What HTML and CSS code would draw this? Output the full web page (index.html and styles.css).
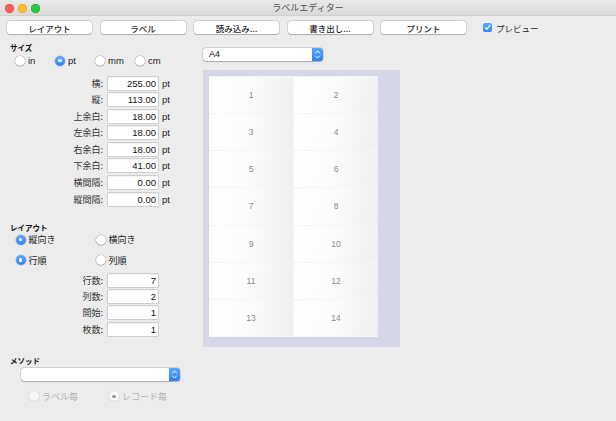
FILE: index.html
```html
<!DOCTYPE html>
<html lang="ja">
<head>
<meta charset="utf-8">
<title>ラベルエディター</title>
<link rel="stylesheet" href="styles.css">
</head>
<body>
<div class="window">
  <div class="titlebar">
    <div class="lights">
      <span class="light red"></span>
      <span class="light yellow"></span>
      <span class="light green"></span>
    </div>
    <div class="title">ラベルエディター</div>
    <div></div>
  </div>

  <div class="toolbar">
    <button class="btn">レイアウト</button>
    <button class="btn">ラベル</button>
    <button class="btn">読み込み...</button>
    <button class="btn">書き出し...</button>
    <button class="btn">プリント</button>
    <label class="check">
      <span class="checkbox"><svg viewBox="0 0 9 9" width="9" height="9"><path d="M2.2 4.7 L3.8 6.4 L6.9 2.4" fill="none" stroke="#fff" stroke-width="1.2" stroke-linecap="round" stroke-linejoin="round"/></svg></span>
      <span>プレビュー</span>
    </label>
  </div>

  <div class="content">
    <div class="left">
      <div class="hdr hdr-size">サイズ</div>
      <div class="units">
        <span class="radio-item"><span class="radio"></span>in</span>
        <span class="radio-item"><span class="radio on"></span>pt</span>
        <span class="radio-item"><span class="radio"></span>mm</span>
        <span class="radio-item"><span class="radio"></span>cm</span>
      </div>
      <div class="fields fields-size">
        <div class="field"><span class="lbl">横:</span><span class="input">255.00</span><span class="unit">pt</span></div>
        <div class="field"><span class="lbl">縦:</span><span class="input">113.00</span><span class="unit">pt</span></div>
        <div class="field"><span class="lbl">上余白:</span><span class="input">18.00</span><span class="unit">pt</span></div>
        <div class="field"><span class="lbl">左余白:</span><span class="input">18.00</span><span class="unit">pt</span></div>
        <div class="field"><span class="lbl">右余白:</span><span class="input">18.00</span><span class="unit">pt</span></div>
        <div class="field"><span class="lbl">下余白:</span><span class="input">41.00</span><span class="unit">pt</span></div>
        <div class="field"><span class="lbl">横間隔:</span><span class="input">0.00</span><span class="unit">pt</span></div>
        <div class="field"><span class="lbl">縦間隔:</span><span class="input">0.00</span><span class="unit">pt</span></div>
      </div>

      <div class="hdr hdr-layout">レイアウト</div>
      <div class="pair pair-1">
        <span class="radio-item"><span class="radio on"></span>縦向き</span>
        <span class="radio-item"><span class="radio"></span>横向き</span>
      </div>
      <div class="pair pair-2">
        <span class="radio-item"><span class="radio on"></span>行順</span>
        <span class="radio-item"><span class="radio"></span>列順</span>
      </div>
      <div class="fields fields-layout">
        <div class="field"><span class="lbl">行数:</span><span class="input">7</span></div>
        <div class="field"><span class="lbl">列数:</span><span class="input">2</span></div>
        <div class="field"><span class="lbl">開始:</span><span class="input">1</span></div>
        <div class="field"><span class="lbl">枚数:</span><span class="input">1</span></div>
      </div>

      <div class="hdr hdr-method">メソッド</div>
      <div class="popup popup-method">
        <span class="popup-text"></span>
        <span class="stepper"><svg viewBox="0 0 11 13" width="11" height="13"><path d="M3.5 5 L5.5 3 L7.5 5 M3.5 8 L5.5 10 L7.5 8" fill="none" stroke="#fff" stroke-width="1" stroke-linecap="round" stroke-linejoin="round"/></svg></span>
      </div>
      <div class="pair pair-method disabled">
        <span class="radio-item"><span class="radio"></span>ラベル毎</span>
        <span class="radio-item"><span class="radio dot"></span>レコード毎</span>
      </div>
    </div>

    <div class="right">
      <div class="popup popup-paper">
        <span class="popup-text">A4</span>
        <span class="stepper"><svg viewBox="0 0 11 13" width="11" height="13"><path d="M3.5 5 L5.5 3 L7.5 5 M3.5 8 L5.5 10 L7.5 8" fill="none" stroke="#fff" stroke-width="1" stroke-linecap="round" stroke-linejoin="round"/></svg></span>
      </div>
      <div class="preview">
        <div class="page">
          <div class="cell">1</div><div class="cell">2</div>
          <div class="cell">3</div><div class="cell">4</div>
          <div class="cell">5</div><div class="cell">6</div>
          <div class="cell">7</div><div class="cell">8</div>
          <div class="cell">9</div><div class="cell">10</div>
          <div class="cell">11</div><div class="cell">12</div>
          <div class="cell">13</div><div class="cell">14</div>
        </div>
      </div>
    </div>
  </div>
</div>
</body>
</html>
```
FILE: styles.css
```css
* { box-sizing: border-box; }
html, body { margin: 0; padding: 0; }
body {
  background: #ececec;
  font-family: "Liberation Sans", "Noto Sans CJK JP", sans-serif;
  font-size: 9px;
  color: #222;
}
.window { width: 616px; height: 421px; overflow: hidden; }

.titlebar {
  height: 16px;
  display: grid;
  grid-template-columns: 1fr auto 1fr;
  align-items: center;
  background: linear-gradient(#e9e9e9, #dadada);
  border-bottom: 1px solid #d0d0d0;
}
.lights { display: flex; gap: 4px; padding-left: 4.5px; }
.light { width: 9px; height: 9px; border-radius: 50%; display: block; }
.red { background: #fc5f57; box-shadow: inset 0 0 0 0.5px #e0443e; }
.yellow { background: #fdbc2e; box-shadow: inset 0 0 0 0.5px #dea123; }
.green { background: #29c840; box-shadow: inset 0 0 0 0.5px #1aab29; }
.title { font-family: "Noto Sans CJK JP", sans-serif; font-size: 9px; color: #4d4d4d; line-height: 16px; }

.toolbar {
  display: flex;
  align-items: center;
  gap: 8.5px;
  padding: 5px 0 0 7px;
  height: 18px;
}
.btn {
  width: 85px;
  height: 12.5px;
  padding: 0;
  border: none;
  border-radius: 3px;
  background: #fff;
  box-shadow: 0 0 0 0.5px rgba(0,0,0,0.18), 0 0.5px 1px rgba(0,0,0,0.2);
  font-family: "Noto Sans CJK JP", sans-serif;
  font-size: 8.5px;
  line-height: 12px;
  color: #1e1e1e;
  font-weight: 500;
}
.check { display: flex; align-items: center; gap: 4px; margin-left: 8.5px; font-family: "Noto Sans CJK JP", sans-serif; font-size: 8.5px; color: #1e1e1e; }
.checkbox {
  width: 9px; height: 9px; border-radius: 2px;
  background: linear-gradient(#5aa8fb, #2f86f3);
  display: block;
}
.checkbox svg { display: block; }

.content { display: flex; }
.left { width: 203px; padding-left: 10px; }
.right { width: 197px; }

.hdr { font-family: "Noto Sans CJK JP", sans-serif; font-weight: bold; font-size: 7.5px; line-height: 10px; color: #111; }
.hdr-size { margin-top: 9px; }
.hdr-layout { margin-top: 17px; }
.hdr-method { margin-top: 20px; }

.radio-item { display: flex; align-items: center; gap: 3px; font-size: 9.5px; line-height: 11px; color: #222; }
.pair .radio-item { font-family: "Noto Sans CJK JP", sans-serif; font-size: 9px; gap: 3px; }
.radio {
  width: 10px; height: 10px; border-radius: 50%;
  background: #fff;
  box-shadow: 0 0 0 0.5px rgba(0,0,0,0.25), 0 0.5px 1px rgba(0,0,0,0.2);
  display: flex; align-items: center; justify-content: center;
  flex: none;
}
.radio.on { background: linear-gradient(#5ea9fb, #2d84f3); box-shadow: 0 0 0 0.5px rgba(0,60,160,0.3); }
.radio.on::after { content: ""; width: 3.5px; height: 3.5px; border-radius: 50%; background: #fff; }
.radio.dot::after { content: ""; width: 3.5px; height: 3.5px; border-radius: 50%; background: #9a9a9a; }

.units { display: grid; grid-template-columns: repeat(4, 40px); margin-top: 2px; padding-left: 5px; height: 11px; }

.fields { display: flex; flex-direction: column; }
.fields-size { margin-top: 10.5px; gap: 3.6px; }
.fields-layout { margin-top: 8px; gap: 3.4px; }
.field { display: flex; align-items: center; height: 13px; }
.lbl { width: 93px; text-align: right; font-family: "Noto Sans CJK JP", sans-serif; font-size: 9px; color: #333; }
.input {
  width: 50px; height: 13px; margin-left: 5px;
  background: #fff;
  box-shadow: 0 0 0 0.5px rgba(0,0,0,0.25), inset 0 0.5px 0 rgba(0,0,0,0.08);
  text-align: right;
  padding-right: 2px;
  font-size: 9.5px;
  line-height: 13px;
  color: #111;
}
.unit { margin-left: 4px; font-size: 9.5px; color: #222; }

.pair { display: grid; grid-template-columns: 80px 80px; padding-left: 5.5px; height: 11px; }
.pair-1 { margin-top: 1.5px; }
.pair-2 { margin-top: 9.5px; }
.pair-method { margin-top: 10px; padding-left: 19px; }
.pair.disabled .radio-item { color: #b4b4b4; }
.pair.disabled .radio { box-shadow: 0 0 0 0.5px rgba(0,0,0,0.12); background: #f7f7f7; }

.popup {
  display: flex; height: 13px;
  background: #fff;
  border-radius: 3px;
  box-shadow: 0 0 0 0.5px rgba(0,0,0,0.2), 0 0.5px 1px rgba(0,0,0,0.2);
}
.popup-text { flex: 1; padding-left: 6px; line-height: 13px; font-size: 9px; color: #111; }
.stepper {
  width: 11px; height: 13px;
  background: linear-gradient(#5aa8fb, #2c82f2);
  border-radius: 0 3px 3px 0;
  display: block;
}
.stepper svg { display: block; }
.popup-method { width: 159.5px; margin-top: 2px; margin-left: 10.7px; }
.popup-paper { width: 120px; margin-top: 13.5px; }

.preview {
  margin-top: 9px;
  width: 197px; height: 277px;
  background: #d5d6e6;
  padding: 6px 0 0 6px;
}
.page {
  width: 169px; height: 261px;
  display: grid;
  grid-template-columns: 1fr 1fr;
  grid-template-rows: repeat(7, 1fr);
  column-gap: 1px;
  background: #f6f6f6;
}
.cell {
  display: flex; align-items: center; justify-content: center;
  background: linear-gradient(100deg, #ffffff 0%, #fbfbfb 50%, #efefef 100%);
  border-top: 1px solid #f5f5f5;
  font-size: 8.5px;
  color: #8a8a8a;
}
```
